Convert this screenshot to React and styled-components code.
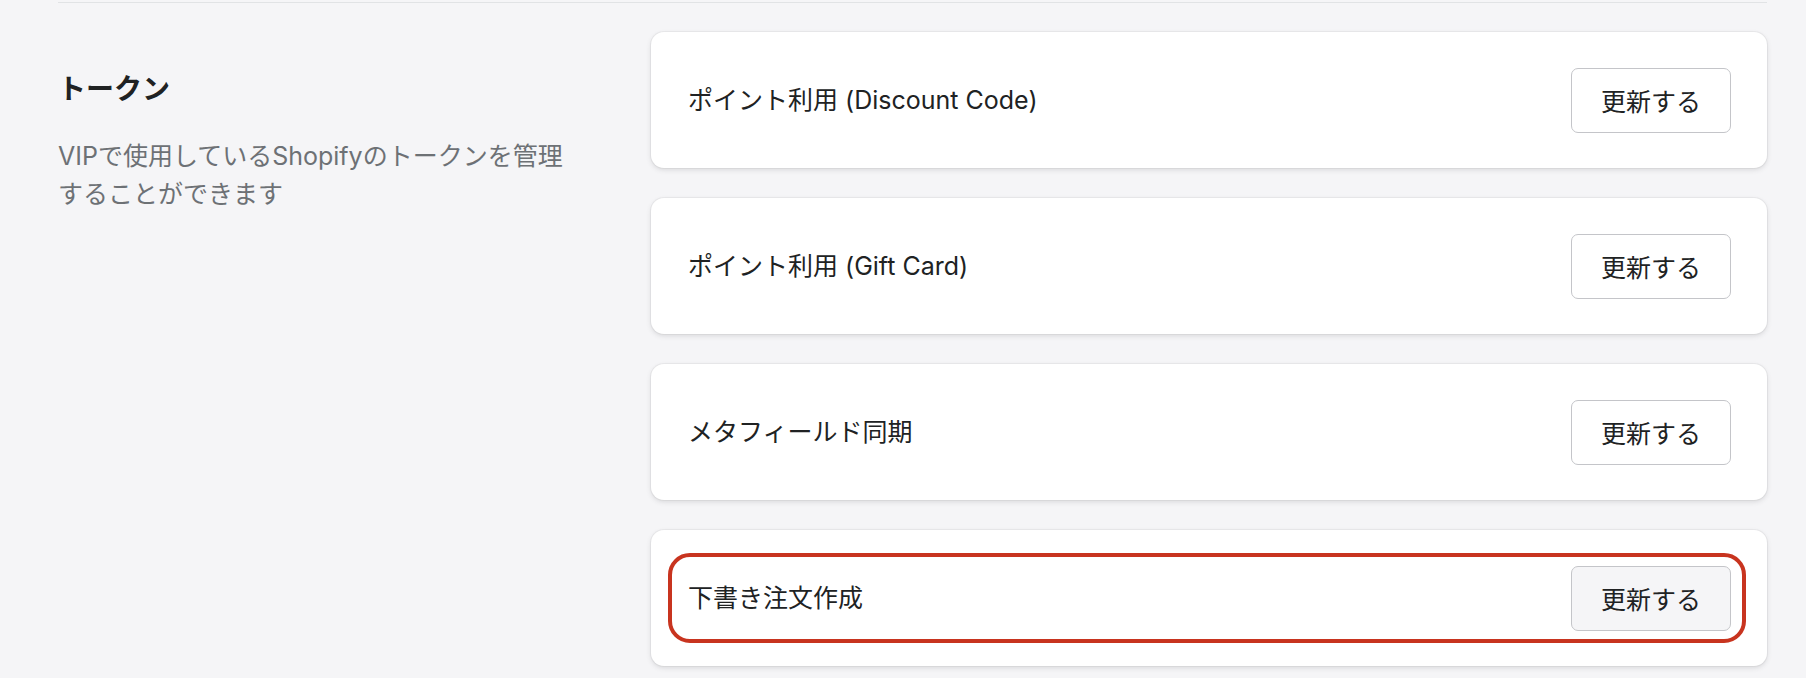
import React from "react";
import styled, { createGlobalStyle } from "styled-components";

const TOKENS = [
    { label: "ポイント利用 (Discount Code)" },
    { label: "ポイント利用 (Gift Card)" },
    { label: "メタフィールド同期" },
    { label: "下書き注文作成", highlighted: true },
];

const GlobalStyle = createGlobalStyle`
    html, body {
        margin: 0;
        padding: 0;
        background: #f5f5f7;
    }

    body {
        font-family: "Inter", "Noto Sans CJK JP", sans-serif;
        color: #202223;
        -webkit-font-smoothing: antialiased;
    }
`;

const App = () => {
    return (
        <>
            <GlobalStyle />
            <Page>
                <Divider />
                <Layout>
                    <Annotation>
                        <h2>トークン</h2>
                        <p>VIPで使用しているShopifyのトークンを管理することができます</p>
                    </Annotation>
                    <CardList>
                        {TOKENS.map((item, idx) => (
                            <Card key={idx}>
                                <span className="label">{item.label}</span>
                                <Button $active={item.highlighted}>更新する</Button>
                                {item.highlighted && <Highlight />}
                            </Card>
                        ))}
                    </CardList>
                </Layout>
            </Page>
        </>
    );
};

export default App;

const Page = styled.div`
    padding: 2px 39px 0 58px;
    min-height: 676px;
`;

const Divider = styled.hr`
    margin: 0;
    border: 0;
    border-top: 1px solid #e1e3e5;
`;

const Layout = styled.div`
    display: grid;
    grid-template-columns: 593px 1fr;
    padding-top: 29px;
`;

const Annotation = styled.div`
    padding-top: 39px;

    h2 {
        margin: 0;
        font-size: 28px;
        line-height: 36px;
        font-weight: 700;
        color: #202223;
    }

    p {
        margin: 30px 0 0;
        width: 516px;
        font-size: 25px;
        line-height: 38px;
        color: #6d7175;
    }
`;

const CardList = styled.div`
    display: flex;
    flex-direction: column;
    gap: 30px;
`;

const Card = styled.div`
    position: relative;
    display: flex;
    align-items: center;
    justify-content: space-between;
    height: 136px;
    padding: 0 36px 0 37px;
    box-sizing: border-box;
    background: #ffffff;
    border-radius: 13px;
    box-shadow: 0 0 0 1px rgba(63, 63, 68, 0.05),
        0 2px 5px 0 rgba(63, 63, 68, 0.15);

    .label {
        font-size: 25px;
        line-height: 32px;
        color: #202223;
    }
`;

const Button = styled.button`
    width: 160px;
    height: 65px;
    font-family: inherit;
    font-size: 25px;
    color: #202223;
    background: ${(p) => (p.$active ? "#f5f5f7" : "#ffffff")};
    border: 1px solid #c4c5c9;
    border-radius: 7px;
    cursor: pointer;
`;

const Highlight = styled.div`
    position: absolute;
    top: 23px;
    bottom: 23px;
    left: 17px;
    right: 21px;
    border: 4px solid #c8341f;
    border-radius: 22px;
    pointer-events: none;
`;
